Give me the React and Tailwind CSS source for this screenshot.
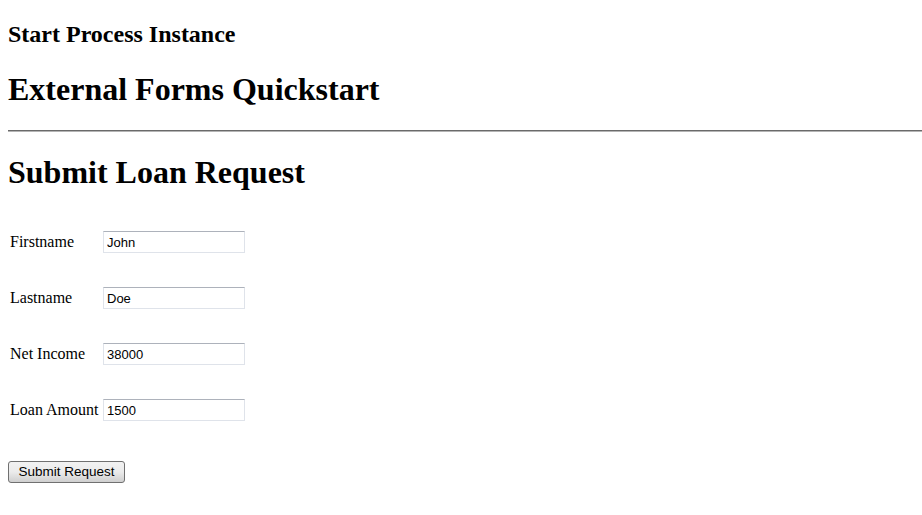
const FIELDS = [
  { label: 'Firstname', value: 'John' },
  { label: 'Lastname', value: 'Doe' },
  { label: 'Net Income', value: '38000' },
  { label: 'Loan Amount', value: '1500' },
]

export default function App() {
  return (
    <div className="min-h-[515px] bg-white pl-2 pt-[21px] text-black font-['Liberation_Serif',serif]">
      <h2 className="text-[24px] leading-[27px] font-bold">Start Process Instance</h2>
      <h1 className="mt-[23px] text-[32px] leading-[37px] font-bold">External Forms Quickstart</h1>
      <hr className="mt-[22px] border-0 border-t border-t-[#6a6a6a] border-b border-b-[#b4b4b4] h-0" />
      <h1 className="mt-[22px] text-[32px] leading-[37px] font-bold">Submit Loan Request</h1>

      <form className="mt-[23px]" onSubmit={e => e.preventDefault()}>
        <div className="flex flex-col">
          {FIELDS.map(f => (
            <div key={f.label} className="flex items-center h-[56px]">
              <label className="w-[95px] pl-[2px] text-[16px]">{f.label}</label>
              <input
                defaultValue={f.value}
                className="w-[142px] h-[22px] px-[3px] text-[13px] font-['Liberation_Sans',Arial,sans-serif] border border-[#dfe3ea] border-t-[#adb2bb] bg-white outline-none"
              />
            </div>
          ))}
        </div>
        <button
          type="submit"
          className="mt-[23px] w-[117px] h-[22px] text-[13.5px] font-['Liberation_Sans',Arial,sans-serif] text-black rounded-[3px] border border-[#707070] bg-gradient-to-b from-[#f2f2f2] via-[#ebebeb] to-[#cfcfcf]"
        >
          Submit Request
        </button>
      </form>
    </div>
  )
}
